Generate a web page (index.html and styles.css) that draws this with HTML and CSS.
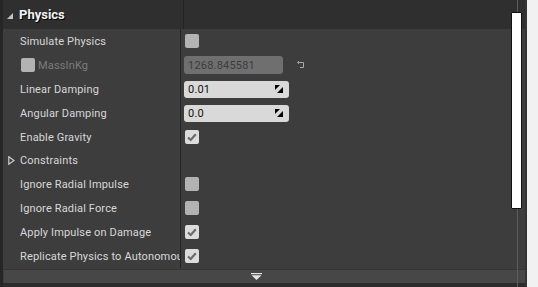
FILE: index.html
```html
<!DOCTYPE html>
<html lang="en">
<head>
    <meta charset="UTF-8">
    <title>Details - Physics</title>
    <link rel="stylesheet" href="styles.css">
</head>
<body>
    <div class="panel">
        <div class="header">
            <div class="name-cell">
                <svg class="caret" width="6" height="6" viewBox="0 0 6 6"><polygon points="6,0 6,6 0,6" fill="#c4c4c4"/></svg>
                <span class="title">Physics</span>
            </div>
            <div class="value-cell"></div>
        </div>

        <div class="rows">
            <div class="row">
                <div class="label">Simulate Physics</div>
                <div class="value"><span class="check"></span></div>
            </div>
            <div class="row">
                <div class="label disabled"><span class="check small-left"></span>MassInKg</div>
                <div class="value">
                    <div class="field field-disabled">1268.845581</div>
                    <svg class="reset" width="8" height="8" viewBox="0 0 8 8">
                        <path d="M1 1.5 H6.5 V6.5 H3" fill="none" stroke="#a8a8a8" stroke-width="1"/>
                        <path d="M0.5 1.5 L2 0.3 M0.5 1.5 L2 2.7" fill="none" stroke="#a8a8a8" stroke-width="1"/>
                    </svg>
                </div>
            </div>
            <div class="row">
                <div class="label">Linear Damping</div>
                <div class="value">
                    <div class="field">0.01
                        <svg class="spin" width="8" height="8" viewBox="0 0 8 8"><polygon points="0,0 5,0 0,5" fill="#000"/><polygon points="8,2 8,8 2,8" fill="#000"/></svg>
                    </div>
                </div>
            </div>
            <div class="row">
                <div class="label">Angular Damping</div>
                <div class="value">
                    <div class="field">0.0
                        <svg class="spin" width="8" height="8" viewBox="0 0 8 8"><polygon points="0,0 5,0 0,5" fill="#000"/><polygon points="8,2 8,8 2,8" fill="#000"/></svg>
                    </div>
                </div>
            </div>
            <div class="row">
                <div class="label">Enable Gravity</div>
                <div class="value"><span class="check checked"><svg width="14" height="14" viewBox="0 0 14 14"><path d="M3 7.5 L5.7 10 L10.8 4.2" fill="none" stroke="#6c6c6c" stroke-width="2.2"/></svg></span></div>
            </div>
            <div class="row group-row">
                <div class="label group">
                    <svg class="expander" width="7" height="9" viewBox="0 0 7 9"><polygon points="0.8,0.8 6,4.5 0.8,8.2" fill="none" stroke="#cfcfcf" stroke-width="1.2"/></svg>Constraints
                </div>
                <div class="value"></div>
            </div>
            <div class="row">
                <div class="label">Ignore Radial Impulse</div>
                <div class="value"><span class="check"></span></div>
            </div>
            <div class="row">
                <div class="label">Ignore Radial Force</div>
                <div class="value"><span class="check"></span></div>
            </div>
            <div class="row">
                <div class="label">Apply Impulse on Damage</div>
                <div class="value"><span class="check checked"><svg width="14" height="14" viewBox="0 0 14 14"><path d="M3 7.5 L5.7 10 L10.8 4.2" fill="none" stroke="#6c6c6c" stroke-width="2.2"/></svg></span></div>
            </div>
            <div class="row">
                <div class="label">Replicate Physics to Autonomous Proxy</div>
                <div class="value"><span class="check checked"><svg width="14" height="14" viewBox="0 0 14 14"><path d="M3 7.5 L5.7 10 L10.8 4.2" fill="none" stroke="#6c6c6c" stroke-width="2.2"/></svg></span></div>
            </div>
        </div>

        <div class="footer">
            <svg width="11" height="7" viewBox="0 0 11 7"><rect x="0" y="0" width="11" height="1.2" fill="#e6e6e6"/><polygon points="0.5,2.3 10.5,2.3 5.5,7" fill="#e6e6e6"/></svg>
        </div>
        <div class="bottom-edge"></div>

        <div class="scrollbar">
            <div class="thumb"></div>
        </div>
    </div>
</body>
</html>
```

FILE: styles.css
```css
body {
    margin: 0;
    background-color: #f1f1f1;
    font-family: Roboto, "Liberation Sans", sans-serif;
    font-size: 11px;
}

.panel {
    position: relative;
    width: 522px;
    height: 287px;
    background-color: #3d3d3d;
    border-left: 3px solid #262626;
    border-right: 2px solid #343434;
    display: flex;
    flex-direction: column;
    overflow: hidden;
}

.header {
    display: flex;
    height: 29px;
    background-color: #2f2f2f;
    flex-shrink: 0;
}

.name-cell {
    width: 176px;
    border-right: 1px solid #232323;
    display: flex;
    align-items: center;
    padding-left: 4px;
}

.caret {
    margin-right: 6px;
    margin-top: 2px;
}

.title {
    color: #f2f2f2;
    font-weight: bold;
    font-size: 13px;
    text-shadow: 1px 1px 0 #000;
}

.value-cell {
    flex: 1;
}

.rows {
    display: flex;
    flex-direction: column;
}

.row {
    display: flex;
    height: 24px;
}

.row.group-row {
    height: 23px;
}

.label {
    width: 160px;
    padding-left: 17px;
    border-right: 1px solid #232323;
    color: #d8d8d8;
    display: flex;
    align-items: center;
    white-space: nowrap;
    overflow: hidden;
    letter-spacing: 0.15px;
}

.label.disabled {
    color: #7c7c7c;
}

.label.group {
    width: 172px;
    padding-left: 5px;
}

.expander {
    margin-right: 5px;
}

.value {
    flex: 1;
    display: flex;
    align-items: center;
    padding-left: 3px;
}

.check {
    display: inline-block;
    width: 14px;
    height: 14px;
    border-radius: 2px;
    background-color: #b3b3b3;
    margin-left: 1px;
}

.check.checked {
    background-color: #dcdcdc;
}

.check svg {
    display: block;
}

.small-left {
    margin-left: 1px;
    margin-right: 3px;
    flex-shrink: 0;
}

.field {
    width: 105px;
    height: 17px;
    box-sizing: border-box;
    border-radius: 3px;
    background-color: #d9d9d9;
    color: #111;
    padding-left: 4px;
    padding-right: 6px;
    display: flex;
    align-items: center;
    justify-content: space-between;
    letter-spacing: 0.2px;
}

.field-disabled {
    width: 99px;
    height: 18px;
    background-color: #6f6f6f;
    color: #3c3c3c;
}

.reset {
    margin-left: 14px;
}

.footer {
    margin-top: 1px;
    height: 14px;
    margin-left: 1px;
    background-color: #474747;
    border-top: 1px solid #353535;
    box-sizing: border-box;
    display: flex;
    align-items: center;
    padding-left: 247px;
}

.bottom-edge {
    flex: 1;
    background-color: #2c2c2c;
}

.scrollbar {
    position: absolute;
    top: 0;
    bottom: 0;
    left: 508px;
    width: 11px;
}

.scrollbar::before {
    content: "";
    position: absolute;
    top: 0;
    bottom: 0;
    left: 6px;
    width: 1px;
    background-color: #5c5c5c;
}

.thumb {
    position: absolute;
    top: 12px;
    left: 0;
    width: 9px;
    height: 195px;
    background-color: #fff;
    border: 1px solid #111;
    border-radius: 1px;
}
```
